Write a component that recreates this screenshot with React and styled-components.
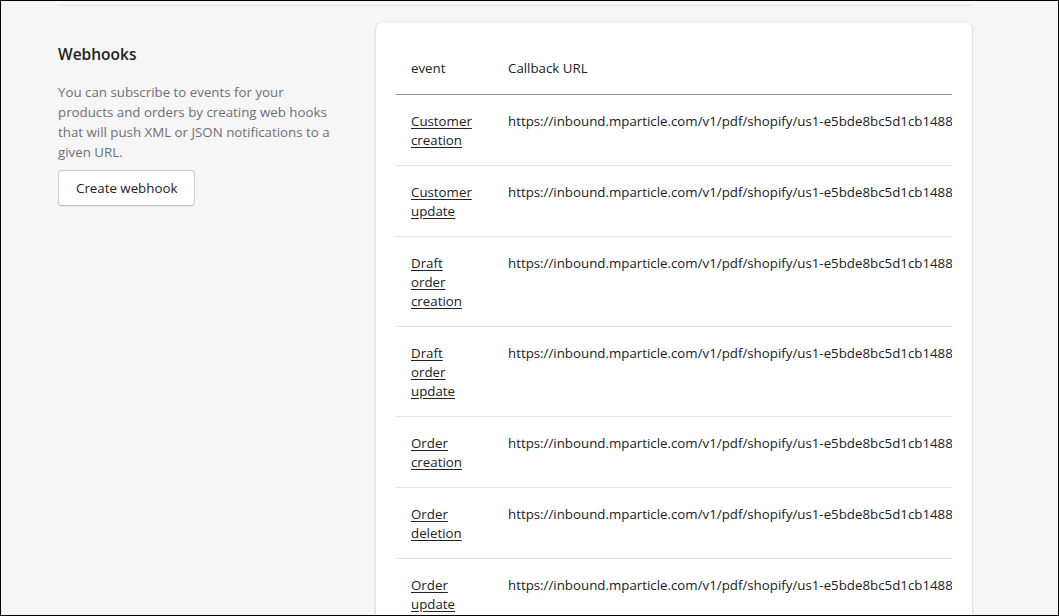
import React from 'react';
import styled, { createGlobalStyle } from 'styled-components';

const GlobalStyle = createGlobalStyle`
    html, body {
        margin: 0;
        padding: 0;
        background: #f6f6f7;
    }
    * {
        box-sizing: border-box;
    }
`;

const Frame = styled.div`
    height: 616px;
    border: 1px solid #000;
    overflow: hidden;
    background: #f6f6f7;
    font-family: "Segoe UI", "Open Sans", "Noto Sans", sans-serif;
    font-size: 13.3px;
    color: #202223;
`;

const Page = styled.div`
    width: 914px;
    margin-left: 57px;
    margin-top: 4px;
    border-top: 1px solid #e1e3e5;
    padding-top: 16px;
`;

const Section = styled.div`
    display: grid;
    grid-template-columns: 278px 596px;
    column-gap: 40px;
`;

const Aside = styled.div`
    padding-top: 20px;
`;

const Heading = styled.h2`
    margin: 0;
    font-size: 15.5px;
    line-height: 24px;
    font-weight: 600;
`;

const Description = styled.p`
    margin: 16px 0 8px;
    color: #6d7175;
    font-size: 13.3px;
    line-height: 20px;
`;

const Button = styled.button`
    height: 36px;
    padding: 0 17px;
    background: #fff;
    border: 1px solid #c9cccf;
    border-bottom-color: #babfc3;
    border-radius: 4px;
    box-shadow: 0 1px 0 rgba(0, 0, 0, 0.05);
    font-family: inherit;
    font-size: 13.3px;
    font-weight: 500;
    color: #202223;
    cursor: pointer;
`;

const Card = styled.div`
    background: #fff;
    border-radius: 8px;
    box-shadow: 0 0 0 1px rgba(63, 63, 68, 0.05), 0 1px 3px rgba(63, 63, 68, 0.15);
    padding: 20px;
    min-height: 700px;
`;

const TableWrap = styled.div`
    overflow: hidden;
`;

const Table = styled.table`
    border-collapse: collapse;
    width: 100%;
    table-layout: fixed;
`;

const Th = styled.th`
    text-align: left;
    font-weight: 400;
    padding: 17px 15px 16px;
    line-height: 19px;
    width: ${p => p.$w || 'auto'};
    border-bottom: 1px solid #8c9196;
    white-space: nowrap;
`;

const Td = styled.td`
    vertical-align: top;
    padding: 17px 15px 15px;
    line-height: 19px;
    border-bottom: 1px solid #e1e3e5;
    white-space: ${p => (p.$nowrap ? 'nowrap' : 'normal')};
    overflow: hidden;
    text-overflow: clip;
`;

const EventLink = styled.a`
    color: #202223;
    text-decoration: underline;
    text-underline-offset: 2px;
    word-spacing: 100px;
`;

const url = 'https://inbound.mparticle.com/v1/pdf/shopify/us1-e5bde8bc5d1cb14889a0c4ad7a3e6f1b';

const events = [
    'Customer creation',
    'Customer update',
    'Draft order creation',
    'Draft order update',
    'Order creation',
    'Order deletion',
    'Order update',
    'Product creation',
];

const App = () => {
    return (
        <>
            <GlobalStyle />
            <Frame>
                <Page>
                    <Section>
                        <Aside>
                            <Heading>Webhooks</Heading>
                            <Description>
                                You can subscribe to events for your products and orders by creating web hooks that will push XML or JSON notifications to a given URL.
                            </Description>
                            <Button>Create webhook</Button>
                        </Aside>
                        <Card>
                            <TableWrap>
                                <Table>
                                    <thead>
                                        <tr>
                                            <Th $w="97px">event</Th>
                                            <Th>Callback URL</Th>
                                        </tr>
                                    </thead>
                                    <tbody>
                                        {events.map((e, key) => (
                                            <tr key={key}>
                                                <Td><EventLink href="#">{e}</EventLink></Td>
                                                <Td $nowrap>{url}</Td>
                                            </tr>
                                        ))}
                                    </tbody>
                                </Table>
                            </TableWrap>
                        </Card>
                    </Section>
                </Page>
            </Frame>
        </>
    );
};

export default App;
